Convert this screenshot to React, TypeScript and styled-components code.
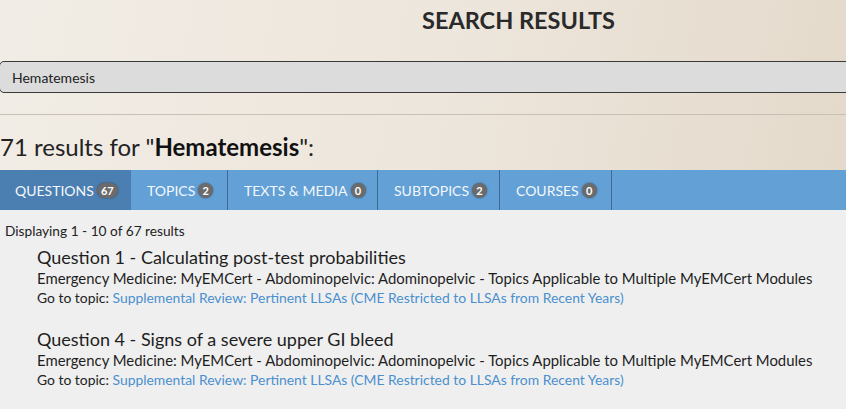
import React from "react";
import styled, { createGlobalStyle } from "styled-components";

const Global = createGlobalStyle`
  html, body { margin: 0; padding: 0; }
  body {
    font-family: Lato, "Open Sans", sans-serif;
    background: linear-gradient(100deg, #f1ece5 0%, #ede6dc 50%, #e3d8c9 100%);
    min-height: 409px;
    overflow: hidden;
  }
`;

const Page = styled.div`
  width: 846px;
  display: flex;
  flex-direction: column;
  overflow: hidden;
`;

const Title = styled.h1`
  margin: 0;
  padding: 0 0 0 422px;
  height: 61px;
  line-height: 40px;
  box-sizing: border-box;
  font-size: 23.5px;
  font-weight: 700;
  color: #2a2a2a;
`;

const SearchBox = styled.div`
  margin-left: -1px;
  width: 900px;
  height: 32px;
  flex-shrink: 0;
  box-sizing: border-box;
  border: 1px solid #3a3a3a;
  border-radius: 5px;
  background: #dcdcdc;
  display: flex;
  align-items: center;
  padding-left: 12px;
  font-size: 14px;
  color: #222;
`;

const Divider = styled.hr`
  margin: 21px 0 0;
  border: 0;
  border-top: 1px solid #c9c0b5;
  height: 0;
`;

const ResultsHeading = styled.h2`
  margin: 0;
  padding-top: 17px;
  height: 55px;
  line-height: 30px;
  box-sizing: border-box;
  font-size: 24px;
  font-weight: 400;
  color: #222;
  strong { font-weight: 700; color: #111; }
`;

const TabBar = styled.div`
  display: flex;
  height: 40px;
  flex-shrink: 0;
  background: #62a0d6;
`;

const Tab = styled.div<{ $active?: boolean; $w: number }>`
  width: ${(p) => p.$w}px;
  box-sizing: border-box;
  display: flex;
  align-items: center;
  padding-left: ${(p) => (p.$active ? 15 : 16)}px;
  gap: 3px;
  background: ${(p) => (p.$active ? "#4b7fb1" : "transparent")};
  border-right: ${(p) => (p.$active ? "none" : "1px solid #3d6a93")};
  color: #f4f8fc;
  font-size: 14px;
  text-transform: uppercase;
`;

const Badge = styled.span`
  display: inline-flex;
  align-items: center;
  justify-content: center;
  min-width: 15px;
  height: 15px;
  padding: 0 4px;
  box-sizing: border-box;
  border-radius: 8px;
  background: #6b6b6b;
  color: #fff;
  font-size: 11px;
  font-weight: 700;
  box-shadow: 0 0 2px rgba(0, 0, 0, 0.45);
`;

const Content = styled.div`
  background: #efefef;
  padding: 13px 0 0 5px;
  height: 200px;
`;

const Displaying = styled.div`
  font-size: 13.7px;
  line-height: 16px;
  color: #222;
  margin-bottom: 7px;
`;

const Result = styled.div`
  padding-left: 32px;
  margin-bottom: 22px;
`;

const QTitle = styled.div`
  font-size: 18px;
  color: #1e1e1e;
  line-height: 22px;
`;

const Path = styled.div`
  font-size: 14.9px;
  color: #1e1e1e;
  line-height: 21px;
  white-space: nowrap;
`;

const GoTo = styled.div`
  font-size: 13.9px;
  color: #222;
  line-height: 17px;
  white-space: nowrap;
  a { color: #4a90d0; text-decoration: none; }
`;

const tabs = [
  { label: "Questions", count: 67, w: 131, active: true },
  { label: "Topics", count: 2, w: 97 },
  { label: "Texts & Media", count: 0, w: 150 },
  { label: "Subtopics", count: 2, w: 122 },
  { label: "Courses", count: 0, w: 112 },
];

const results = [
  "Question 1 - Calculating post-test probabilities",
  "Question 4 - Signs of a severe upper GI bleed",
];

export default function App() {
  return (
    <Page>
      <Global />
      <Title>SEARCH RESULTS</Title>
      <SearchBox>Hematemesis</SearchBox>
      <Divider />
      <ResultsHeading>
        71 results for "<strong>Hematemesis</strong>":
      </ResultsHeading>
      <TabBar>
        {tabs.map((t) => (
          <Tab key={t.label} $active={t.active} $w={t.w}>
            {t.label} <Badge>{t.count}</Badge>
          </Tab>
        ))}
      </TabBar>
      <Content>
        <Displaying>Displaying 1 - 10 of 67 results</Displaying>
        {results.map((r) => (
          <Result key={r}>
            <QTitle>{r}</QTitle>
            <Path>
              Emergency Medicine: MyEMCert - Abdominopelvic: Adominopelvic - Topics Applicable to Multiple MyEMCert Modules
            </Path>
            <GoTo>
              Go to topic:{" "}
              <a href="#">Supplemental Review: Pertinent LLSAs (CME Restricted to LLSAs from Recent Years)</a>
            </GoTo>
          </Result>
        ))}
      </Content>
    </Page>
  );
}
